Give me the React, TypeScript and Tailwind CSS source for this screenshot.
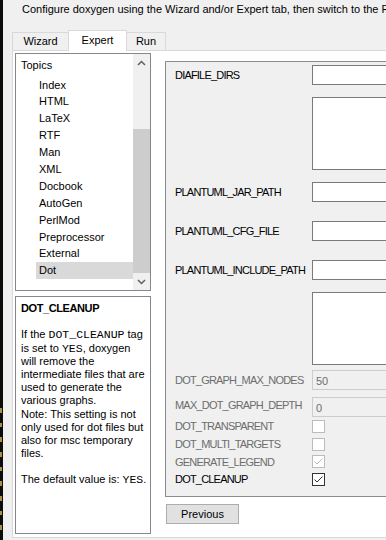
import React from "react";

const topics = [
  "Index",
  "HTML",
  "LaTeX",
  "RTF",
  "Man",
  "XML",
  "Docbook",
  "AutoGen",
  "PerlMod",
  "Preprocessor",
  "External",
  "Dot",
];

function Check({ disabled, checked }: { disabled?: boolean; checked?: boolean }) {
  return (
    <div
      className={
        disabled
          ? "w-[13px] h-[13px] bg-white border border-[#bcbcbc]"
          : "w-[13px] h-[13px] bg-white border border-[#333333]"
      }
    >
      {checked && (
        <svg width="11" height="11" viewBox="0 0 11 11" className="block">
          <polyline
            points="1.5,5.5 4,8 9.5,2.5"
            fill="none"
            stroke={disabled ? "#bcbcbc" : "#333333"}
            strokeWidth="1"
          />
        </svg>
      )}
    </div>
  );
}

function Label({ text, disabled }: { text: string; disabled?: boolean }) {
  return (
    <div
      className={
        disabled
          ? "w-[137px] shrink-0 whitespace-nowrap tracking-[-0.8px] text-[#6d6d6d]"
          : "w-[137px] shrink-0 whitespace-nowrap tracking-[-0.8px] text-black"
      }
    >
      {text}
    </div>
  );
}

function LineEdit() {
  return <div className="h-[20px] w-[120px] shrink-0 bg-white border border-[#7a7a7a]" />;
}

function Spin({ value }: { value: string }) {
  return (
    <div className="h-[20px] w-[120px] shrink-0 bg-[#f0f0f0] border border-[#cccccc] pl-[3px] flex items-center pt-[2px] text-[#6d6d6d]">
      {value}
    </div>
  );
}

export default function App() {
  const help: string[] = [];
  return (
    <div className="w-[386px] h-[540px] overflow-hidden bg-[#f0f0f0] flex font-['Liberation_Sans',Arial,sans-serif] text-[11px] text-black">
      {/* dark strip at the left edge */}
      <div className="w-[3px] shrink-0 h-full bg-[#0c0c0c] flex flex-col pt-[408px]">
        {Array.from({ length: 9 }).map((_, i) => (
          <div key={i} className="w-[2px] h-[5px] mb-[10px] bg-[#a89040]" />
        ))}
      </div>

      <div className="w-[600px] shrink-0 flex flex-col">
        <div className="pl-[19px] pt-[3px] h-[16px] leading-[13px] whitespace-nowrap">
          Configure doxygen using the Wizard and/or Expert tab, then switch to the Run tab to generate the documentation.
        </div>

        {/* tabs */}
        <div className="relative z-10 flex items-end h-[20px] mt-[14px] ml-[9px]">
          <div className="w-[56px] h-[18px] border-l border-t border-[#d9d9d9] bg-[#f0f0f0] flex items-center justify-center pb-[1px]">
            Wizard
          </div>
          <div className="w-[59px] h-[21px] mb-[-1px] border-l border-t border-r border-[#d9d9d9] bg-white flex items-center justify-center pb-[1px]">
            Expert
          </div>
          <div className="w-[39px] h-[18px] border-t border-r border-[#d9d9d9] bg-[#f0f0f0] flex items-center justify-center pb-[1px]">
            Run
          </div>
        </div>

        {/* tab pane */}
        <div className="ml-[9px] w-[560px] h-[488px] border border-[#d9d9d9] bg-white flex">
          {/* left column */}
          <div className="ml-[2px] pt-[2px] w-[136px] shrink-0 flex flex-col">
            <div className="h-[238px] border border-[#828790] bg-white flex">
              <div className="w-[117px] flex flex-col">
                <div className="mt-[3px] h-[17px] leading-[17px] pl-[5px]">Topics</div>
                <div className="mt-[2.5px] flex flex-col">
                  {topics.map((t) => (
                    <div
                      key={t}
                      className={
                        t === "Dot"
                          ? "ml-[20px] pl-[3px] h-[16.9px] leading-[16.9px] bg-[#d9d9d9]"
                          : "ml-[20px] pl-[3px] h-[16.9px] leading-[16.9px]"
                      }
                    >
                      {t}
                    </div>
                  ))}
                </div>
              </div>
              <div className="w-[17px] flex flex-col bg-[#f0f0f0]">
                <div className="h-[17px] flex items-center justify-center">
                  <svg width="9" height="6" viewBox="0 0 9 6">
                    <polyline points="1,5 4.5,1.5 8,5" fill="none" stroke="#606060" strokeWidth="1.5" />
                  </svg>
                </div>
                <div className="flex-1 flex flex-col">
                  <div className="mt-[58px] flex-1 bg-[#cdcdcd]" />
                </div>
                <div className="h-[17px] flex items-center justify-center">
                  <svg width="9" height="6" viewBox="0 0 9 6">
                    <polyline points="1,1 4.5,4.5 8,1" fill="none" stroke="#606060" strokeWidth="1.5" />
                  </svg>
                </div>
              </div>
            </div>

            <div className="mt-[5px] h-[238px] border border-[#828790] bg-white pl-[5px] pt-[5px] flex flex-col">
              <div className="h-[13.2px] leading-[13.2px] font-bold tracking-[-0.4px] whitespace-nowrap">DOT_CLEANUP</div>
              <div className="mt-[13.2px] flex flex-col whitespace-nowrap">
                <div className="h-[13.2px] leading-[13.2px]">
                  If the <span className="font-['Liberation_Mono',monospace] text-[11.5px]">DOT_CLEANUP</span> tag
                </div>
                <div className="h-[13.2px] leading-[13.2px]">
                  is set to <span className="font-['Liberation_Mono',monospace] text-[11.5px]">YES</span>, doxygen
                </div>
                <div className="h-[13.2px] leading-[13.2px]">will remove the</div>
                <div className="h-[13.2px] leading-[13.2px]">intermediate files that are</div>
                <div className="h-[13.2px] leading-[13.2px]">used to generate the</div>
                <div className="h-[13.2px] leading-[13.2px]">various graphs.</div>
                <div className="h-[13.2px] leading-[13.2px]">Note: This setting is not</div>
                <div className="h-[13.2px] leading-[13.2px]">only used for dot files but</div>
                <div className="h-[13.2px] leading-[13.2px]">also for msc temporary</div>
                <div className="h-[13.2px] leading-[13.2px]">files.</div>
                <div className="h-[13.2px]" />
                <div className="h-[13.2px] leading-[13.2px]">
                  The default value is: <span className="font-['Liberation_Mono',monospace] text-[11.5px]">YES</span>.
                </div>
              </div>
              {help}
            </div>
          </div>

          {/* right column */}
          <div className="ml-[14px] mt-[10px] w-[300px] shrink-0 flex flex-col">
            <div className="h-[436px] border border-[#8c8c8c] bg-[#f0f0f0] pl-[9px] pt-[3px] flex flex-col">
              <div className="flex items-center h-[20px]">
                <Label text="DIAFILE_DIRS" />
                <LineEdit />
              </div>
              <div className="mt-[12px] ml-[137px] h-[73px] w-[120px] bg-white border border-[#7a7a7a]" />
              <div className="mt-[12px] flex items-center h-[20px]">
                <Label text="PLANTUML_JAR_PATH" />
                <LineEdit />
              </div>
              <div className="mt-[19px] flex items-center h-[20px]">
                <Label text="PLANTUML_CFG_FILE" />
                <LineEdit />
              </div>
              <div className="mt-[19px] flex items-center h-[20px]">
                <Label text="PLANTUML_INCLUDE_PATH" />
                <LineEdit />
              </div>
              <div className="mt-[12px] ml-[137px] h-[73px] w-[120px] bg-white border border-[#7a7a7a]" />
              <div className="mt-[5px] flex items-center h-[20px]">
                <Label text="DOT_GRAPH_MAX_NODES" disabled />
                <Spin value="50" />
              </div>
              <div className="mt-[7px] flex items-center h-[20px]">
                <div className="pb-[4px]">
                  <Label text="MAX_DOT_GRAPH_DEPTH" disabled />
                </div>
                <Spin value="0" />
              </div>
              <div className="mt-[3px] flex items-center h-[13px]">
                <Label text="DOT_TRANSPARENT" disabled />
                <Check disabled />
              </div>
              <div className="mt-[5px] flex items-center h-[13px]">
                <Label text="DOT_MULTI_TARGETS" disabled />
                <Check disabled />
              </div>
              <div className="mt-[4px] flex items-center h-[13px]">
                <div className="pt-[2px]">
                  <Label text="GENERATE_LEGEND" disabled />
                </div>
                <Check disabled checked />
              </div>
              <div className="mt-[5px] flex items-center h-[13px]">
                <Label text="DOT_CLEANUP" />
                <Check checked />
              </div>
            </div>
            <div className="mt-[7px] ml-[1px] w-[73px] h-[20px] bg-[#e1e1e1] border border-[#adadad] flex items-center justify-center">
              Previous
            </div>
          </div>
        </div>
      </div>
    </div>
  );
}
